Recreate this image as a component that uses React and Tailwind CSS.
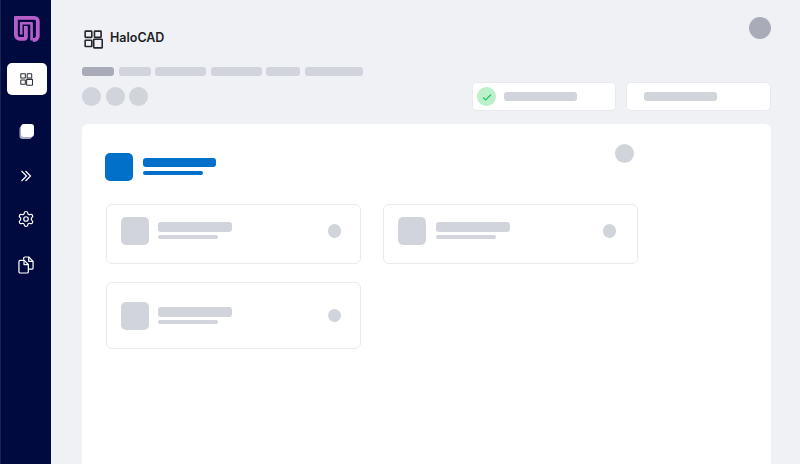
import { Settings } from 'lucide-react'

function GridIcon({ className, strokeWidth = 1.7 }) {
    return (
        <svg className={className} viewBox="0 0 20 20" fill="none" stroke="currentColor" strokeWidth={strokeWidth} strokeLinejoin="round">
            <rect x="1.2" y="1.2" width="7" height="6.6" rx="0.6" />
            <rect x="11" y="1.2" width="7" height="6.6" rx="0.6" />
            <rect x="1.2" y="10.8" width="7" height="6.6" rx="0.6" />
            <rect x="10.2" y="9.8" width="9" height="9" rx="0.6" />
        </svg>
    )
}

function Logo() {
    return (
        <svg className="w-[26px] h-[26px] ml-[1px]" viewBox="0 0 26 26" fill="none" stroke="#b65fc8" strokeLinecap="butt" strokeLinejoin="round">
            {/* outer band, left side down and back up the middle */}
            <path strokeWidth="3.8" d="M1.9 0.5V19a3.8 3.8 0 0 0 3.8 3.8h4.6a1.6 1.6 0 0 0 1.6-1.6V10" />
            {/* top and right side */}
            <path strokeWidth="3.8" d="M0.5 1.9h20a3.3 3.3 0 0 1 3.3 3.3V20a4 4 0 0 1-4 4h-1" />
            {/* inner band */}
            <path strokeWidth="2.6" d="M7.2 18.5V7.2h10.4V24.5" />
        </svg>
    )
}

function CardsIcon() {
    return (
        <svg className="w-[17px] h-[17px]" viewBox="0 0 17 17" fill="none">
            <rect x="1.5" y="3" width="12.5" height="13" rx="3" fill="#a9acc4" />
            <rect x="3" y="1" width="13" height="13" rx="3" fill="#ffffff" />
        </svg>
    )
}

function CopyIcon() {
    return (
        <svg className="w-[16px] h-[18px]" viewBox="0 0 17 19" fill="none" stroke="#ffffff" strokeWidth="1.3" strokeLinejoin="round">
            <path d="M6 4V2.4A1.4 1.4 0 0 1 7.4 1h4l4.6 4.6v7a1.4 1.4 0 0 1-1.4 1.4H11" />
            <path d="M11.4 1v4.6H16" />
            <path d="M2.4 4.6h4.2L11 9v7.6a1.4 1.4 0 0 1-1.4 1.4H2.4A1.4 1.4 0 0 1 1 16.6V6a1.4 1.4 0 0 1 1.4-1.4Z" />
            <path d="M6.4 4.6V9H11" />
        </svg>
    )
}

function Bar({ className }) {
    return <div className={`rounded-[3px] ${className}`} />
}

function ItemCard({ className, textClass = 'ml-[9px]' }) {
    return (
        <div className={`flex items-center bg-white border border-[#e9eaee] rounded-[6px] pl-[14px] ${className}`}>
            <div className="w-[28px] h-[28px] rounded-[5px] bg-[#d1d4db] shrink-0" />
            <div className={`flex-1 ${textClass}`}>
                <Bar className="w-[74px] h-[9.5px] bg-[#d1d4db]" />
                <Bar className="w-[60px] h-[4.5px] mt-[3px] bg-[#d1d4db]" />
            </div>
            <div className="w-[13.5px] h-[13.5px] rounded-full bg-[#d1d4db] shrink-0" />
        </div>
    )
}

export default function App() {
    return (
        <div className="flex w-[800px] h-[464px] overflow-hidden bg-[#f0f1f5] font-['Inter',sans-serif]">
            {/* SIDEBAR */}
            <div className="w-[51px] shrink-0 bg-[#000a3f] border-l border-[#1c2452] flex flex-col items-center">
                <div className="mt-[16px]">
                    <Logo />
                </div>
                <div className="mt-[21px] ml-[1.5px] w-[40px] h-[32px] rounded-[5px] bg-white flex items-center justify-center pr-[1.5px] text-[#2d2f38]">
                    <GridIcon className="w-[13px] h-[13px]" strokeWidth={1.6} />
                </div>
                <div className="mt-[28px]">
                    <CardsIcon />
                </div>
                <svg className="mt-[30px] w-[12px] h-[12px]" viewBox="0 0 12 12" fill="none" stroke="#ffffff" strokeWidth="1.2">
                    <path d="M1.5 1 6.5 6l-5 5" />
                    <path d="M5.5 1 10.5 6l-5 5" />
                </svg>
                <Settings className="mt-[28px] w-[18px] h-[18px] text-white" strokeWidth={1.6} />
                <div className="mt-[28px]">
                    <CopyIcon />
                </div>
            </div>

            {/* MAIN */}
            <div className="flex-1 pl-[31px] pr-[29px] flex flex-col">
                <div className="h-[66.5px] flex justify-between">
                    <div className="mt-[30px] h-[18px] flex items-center">
                        <GridIcon className="ml-[2px] w-[19px] h-[19px] text-[#26272d]" />
                        <span className="ml-[7px] -mt-[1px] text-[12.5px] font-semibold text-[#1d1e24]">HaloCAD</span>
                    </div>
                    <div className="mt-[17px] w-[22px] h-[22px] rounded-full bg-[#a9acb8]" />
                </div>

                {/* TABS */}
                <div className="flex gap-[4.5px] h-[9.5px]">
                    <Bar className="w-[32px] bg-[#a9acb8]" />
                    <Bar className="w-[32px] bg-[#d1d4db]" />
                    <Bar className="w-[51px] bg-[#d1d4db]" />
                    <Bar className="w-[51px] bg-[#d1d4db]" />
                    <Bar className="w-[34px] bg-[#d1d4db]" />
                    <Bar className="w-[58px] bg-[#d1d4db]" />
                </div>

                {/* TOOLBAR */}
                <div className="mt-[6px] h-[29px] flex items-center justify-between">
                    <div className="flex gap-[4.5px]">
                        <div className="w-[19px] h-[19px] rounded-full bg-[#d1d4db]" />
                        <div className="w-[19px] h-[19px] rounded-full bg-[#d1d4db]" />
                        <div className="w-[19px] h-[19px] rounded-full bg-[#d1d4db]" />
                    </div>
                    <div className="flex gap-[10px] mr-[0.5px]">
                        <div className="w-[144.5px] h-[29px] rounded-[5px] bg-white border border-[#e9eaee] flex items-center pl-[4.5px]">
                            <div className="w-[19px] h-[19px] rounded-full bg-[#bbf0cb] flex items-center justify-center">
                                <svg className="w-[10px] h-[10px]" viewBox="0 0 10 10" fill="none" stroke="#22c55e" strokeWidth="1.2">
                                    <path d="M1 5.5 3.8 8 9 2.5" />
                                </svg>
                            </div>
                            <Bar className="ml-[8px] w-[73px] h-[9px] bg-[#d1d4db]" />
                        </div>
                        <div className="w-[144.5px] h-[29px] rounded-[5px] bg-white border border-[#e9eaee] flex items-center pl-[16.5px]">
                            <Bar className="w-[73px] h-[9px] bg-[#d1d4db]" />
                        </div>
                    </div>
                </div>

                {/* PANEL */}
                <div className="mt-[13px] flex-1 bg-white rounded-t-[6px] pl-[24px] pt-[20px]">
                    <div className="w-[528px] flex justify-between items-start">
                        <div className="flex items-center pt-[8.5px] -ml-[1px]">
                            <div className="w-[28px] h-[28px] rounded-[5px] bg-[#0070c9]" />
                            <div className="ml-[10px]">
                                <Bar className="w-[73px] h-[9px] bg-[#0070c9]" />
                                <Bar className="w-[60px] h-[4.5px] mt-[3.5px] bg-[#0070c9]" />
                            </div>
                        </div>
                        <div className="w-[19px] h-[19px] rounded-full bg-[#d1d4db]" />
                    </div>
                    <div className="mt-[23px] grid grid-cols-[255px_255px] gap-x-[22px] gap-y-[18px]">
                        <ItemCard className="h-[60.5px] pb-[6px] pr-[19px]" />
                        <ItemCard className="h-[60.5px] pb-[6px] pr-[21px]" textClass="ml-[10px]" />
                        <ItemCard className="h-[67px] pr-[19px]" />
                    </div>
                </div>
            </div>
        </div>
    )
}
